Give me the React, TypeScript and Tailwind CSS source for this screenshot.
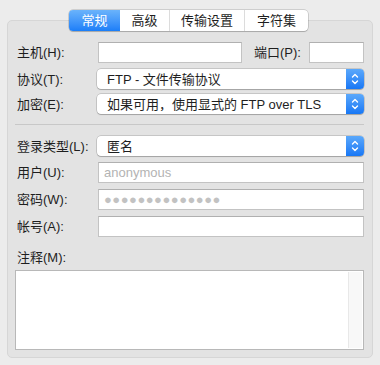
import React from "react";

const font = { fontFamily: '"Liberation Sans", "Noto Sans CJK SC", sans-serif' };

function Stepper() {
  return (
    <div className="flex h-full w-[18px] items-center justify-center rounded-r-[4px] bg-gradient-to-b from-[#5aa8fb] to-[#1677f5]">
      <svg width="8" height="14" viewBox="0 0 8 14" fill="none" stroke="white" strokeWidth="1.4" strokeLinecap="round" strokeLinejoin="round">
        <path d="M1.5 5 L4 2.5 L6.5 5" />
        <path d="M1.5 9 L4 11.5 L6.5 9" />
      </svg>
    </div>
  );
}

function Popup({ text }: { text: string }) {
  return (
    <div className="flex h-[20px] flex-1 items-center rounded-[4px] bg-white shadow-[0_0_0_0.5px_rgba(0,0,0,0.25),0_1px_1px_rgba(0,0,0,0.18)]">
      <div className="flex-1 truncate pl-[10px] text-[13px] leading-none text-[#1e1e1e]">{text}</div>
      <Stepper />
    </div>
  );
}

function Field({ children, className = "" }: { children?: React.ReactNode; className?: string }) {
  return (
    <div className={`flex h-[21px] items-center border border-[#c3c3c3] border-t-[#b0b0b0] bg-white pl-[5px] text-[13px] leading-none ${className}`}>
      {children}
    </div>
  );
}

function Label({ children }: { children: React.ReactNode }) {
  return <div className="w-[80px] shrink-0 text-[13px] leading-none text-[#1e1e1e]">{children}</div>;
}

export default function App() {
  const tabs = [
    { t: "常规", w: "w-[51px]", sel: true },
    { t: "高级", w: "w-[49px]" },
    { t: "传输设置", w: "w-[75px]" },
    { t: "字符集", w: "w-[64px]" },
  ];
  return (
    <div style={font} className="h-[365px] w-[380px] bg-[#ececec] pt-[10px]">
      <div className="relative z-10 flex justify-center">
        <div className="ml-[-3px] flex h-[21px] overflow-hidden rounded-[4px] bg-white shadow-[0_0_0_0.5px_rgba(0,0,0,0.25),0_1px_1px_rgba(0,0,0,0.15)]">
          {tabs.map((tab, i) => (
            <div
              key={tab.t}
              className={`flex items-center justify-center text-[13px] leading-none ${tab.w} ${
                tab.sel
                  ? "bg-gradient-to-b from-[#6ab3fb] to-[#1a7ef8] text-white"
                  : "text-[#1e1e1e]"
              } ${i > 1 ? "border-l border-[#dcdcdc]" : ""}`}
            >
              {tab.t}
            </div>
          ))}
        </div>
      </div>
      <div className="mx-[7px] -mt-[11px] h-[338px] rounded-[5px] border border-[#d6d6d6] bg-[#e3e3e3] pl-[9px] pr-[8px] pt-[21px]">
        <div className="flex items-center">
          <Label>主机(H):</Label>
          <Field className="w-[144px] ml-[1px]" />
          <div className="ml-[12px] w-[55px] text-[13px] leading-none text-[#1e1e1e]">端口(P):</div>
          <Field className="flex-1" />
        </div>
        <div className="mt-[6px] flex items-center">
          <Label>协议(T):</Label>
          <Popup text="FTP - 文件传输协议" />
        </div>
        <div className="mt-[5px] flex items-center">
          <Label>加密(E):</Label>
          <Popup text="如果可用，使用显式的 FTP over TLS" />
        </div>
        <div className="mt-[10px] ml-[-2px] h-px bg-[#c8c8c8]" />
        <div className="mt-[11px] flex items-center">
          <Label>登录类型(L):</Label>
          <Popup text="匿名" />
        </div>
        <div className="mt-[6px] flex items-center">
          <Label>用户(U):</Label>
          <Field className="ml-[1px] flex-1 text-[#b3b3b3]">anonymous</Field>
        </div>
        <div className="mt-[6px] flex items-center">
          <Label>密码(W):</Label>
          <Field className="ml-[1px] flex-1 text-[9px] tracking-[0.5px] text-[#c2c2c2]">●●●●●●●●●●●●●●</Field>
        </div>
        <div className="mt-[6px] flex items-center">
          <Label>帐号(A):</Label>
          <Field className="ml-[1px] flex-1" />
        </div>
        <div className="mt-[14px] text-[13px] leading-none text-[#1e1e1e]">注释(M):</div>
        <div className="mt-[6px] ml-[-2px] flex h-[80px] border border-[#b8b8b8] bg-white p-px">
          <div className="flex-1" />
          <div className="w-[14px] border-l border-[#e8e8e8] bg-[#f8f8f8]" />
        </div>
      </div>
    </div>
  );
}
